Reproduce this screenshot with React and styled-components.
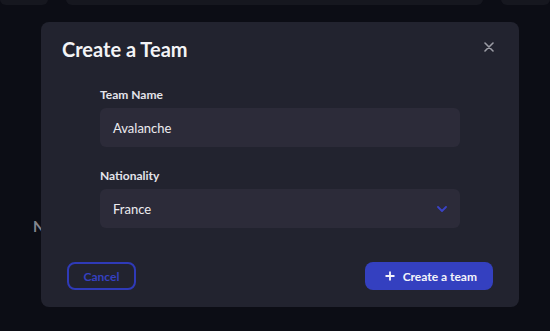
import React from "react";
import styled, { createGlobalStyle } from "styled-components";

const GlobalStyle = createGlobalStyle`
  html, body {
    margin: 0;
    padding: 0;
    background: #0c0d15;
    font-family: "Lato", "Liberation Sans", sans-serif;
  }
  * { box-sizing: border-box; }
`

const Page = styled.div`
  position: relative;
  width: 550px;
  height: 331px;
  overflow: hidden;
  background: #0c0d15;
`

const CardRow = styled.div`
  display: flex;
  gap: 18px;
  margin-top: -10px;
`

const TopCard = styled.div`
  height: 15px;
  width: ${p => p.w}px;
  flex: ${p => (p.grow ? 1 : "none")};
  background: #16171f;
  border-radius: 0 0 6px 6px;
`

const EmptyText = styled.div`
  margin: 211px 0 0 33px;
  font-size: 15px;
  font-weight: 700;
  line-height: 20px;
  color: #84858d;
`

const Overlay = styled.div`
  position: absolute;
  inset: 0;
  padding: 22px 0 0 41px;
`

const Modal = styled.div`
  width: 478px;
  height: 285px;
  background: #22232f;
  border-radius: 8px;
  padding: 15px 21px 17px;
  display: flex;
  flex-direction: column;
`

const Header = styled.div`
  display: flex;
  justify-content: space-between;
  align-items: flex-start;
`

const Title = styled.h2`
  margin: 0;
  font-size: 20px;
  line-height: 24px;
  font-weight: 700;
  color: #f3f3f6;
`

const CloseButton = styled.button`
  display: flex;
  padding: 0;
  margin: 5px 4px 0 0;
  border: none;
  background: none;
  cursor: pointer;
`

const Fields = styled.div`
  display: flex;
  flex-direction: column;
  padding: 0 38px;
  margin-top: 26px;
`

const Field = styled.div`
  display: flex;
  flex-direction: column;
  gap: 5px;
  margin-top: ${p => p.mt || 0}px;
`

const Label = styled.label`
  font-size: 12px;
  line-height: 16px;
  font-weight: 700;
  color: #e4e4ea;
`

const InputBox = styled.div`
  display: flex;
  align-items: center;
  justify-content: space-between;
  height: 39px;
  padding: 0 13px;
  background: #2c2b39;
  border-radius: 6px;
  font-size: 13px;
  color: #ececf0;
`

const Footer = styled.div`
  display: flex;
  justify-content: space-between;
  padding: 0 5px;
  margin-top: auto;
`

const OutlineButton = styled.button`
  width: 69px;
  height: 28px;
  border: 2px solid #2f3ab8;
  border-radius: 8px;
  background: transparent;
  color: #3540c0;
  font-family: inherit;
  font-size: 12px;
  font-weight: 700;
  cursor: pointer;
`

const PrimaryButton = styled.button`
  display: flex;
  align-items: center;
  gap: 8px;
  height: 28px;
  padding: 0 16px 0 20px;
  border: none;
  border-radius: 8px;
  background: #3440c0;
  color: #f4f4fa;
  font-family: inherit;
  font-size: 12px;
  font-weight: 700;
  cursor: pointer;
`

export default function App() {
  return (
    <>
      <GlobalStyle />
      <Page>
        <CardRow>
          <TopCard w={48} />
          <TopCard grow />
          <TopCard w={49} />
        </CardRow>
        <EmptyText>No teams yet</EmptyText>

        <Overlay>
          <Modal>
            <Header>
              <Title>Create a Team</Title>
              <CloseButton aria-label="Close">
                <svg width="10" height="10" viewBox="0 0 10 10">
                  <path d="M1 1L9 9M9 1L1 9" stroke="#9b9ca5" strokeWidth="1.6" strokeLinecap="round" />
                </svg>
              </CloseButton>
            </Header>

            <Fields>
              <Field>
                <Label>Team Name</Label>
                <InputBox>Avalanche</InputBox>
              </Field>
              <Field mt={21}>
                <Label>Nationality</Label>
                <InputBox>
                  France
                  <svg width="10" height="6" viewBox="0 0 10 6">
                    <path d="M1 1L5 5L9 1" fill="none" stroke="#3a42c6" strokeWidth="1.8" strokeLinecap="round" strokeLinejoin="round" />
                  </svg>
                </InputBox>
              </Field>
            </Fields>

            <Footer>
              <OutlineButton>Cancel</OutlineButton>
              <PrimaryButton>
                <svg width="10" height="10" viewBox="0 0 10 10">
                  <path d="M5 0.5V9.5M0.5 5H9.5" stroke="#f4f4fa" strokeWidth="1.8" />
                </svg>
                Create a team
              </PrimaryButton>
            </Footer>
          </Modal>
        </Overlay>
      </Page>
    </>
  );
}
